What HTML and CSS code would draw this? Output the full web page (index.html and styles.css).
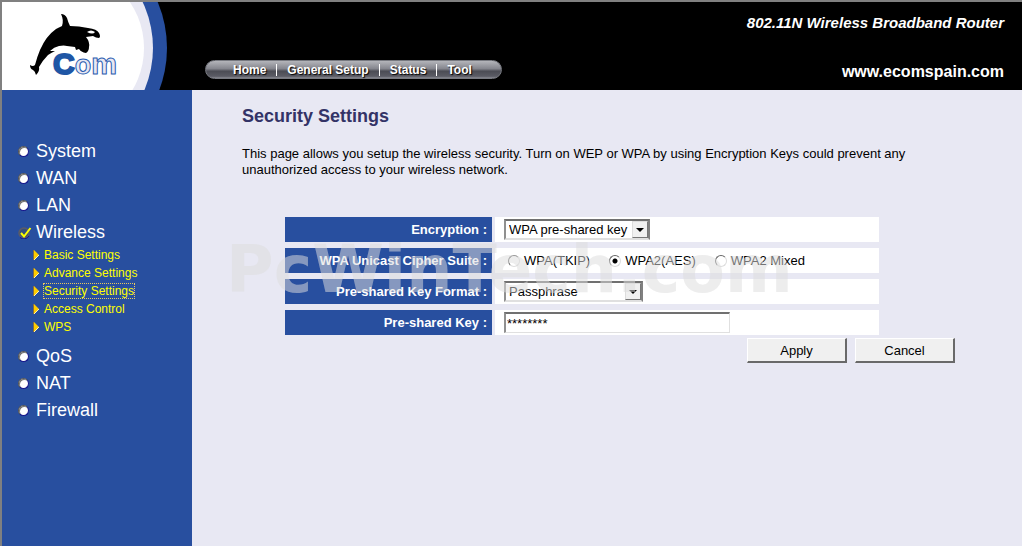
FILE: index.html
```
<!DOCTYPE html>
<html lang="en">
  <head>
    <meta charset="UTF-8" />
    <meta name="viewport" content="width=device-width, initial-scale=1.0" />
    <title>802.11N Wireless Broadband Router</title>
    <link rel="stylesheet" href="styles.css">
  </head>
  <body>
    <header class="header">
      <svg class="logo" viewBox="2 2 170 88" role="img" aria-label="eCom">
        <circle cx="49" cy="48" r="118" fill="#284f9f" />
        <circle cx="46" cy="48" r="107" fill="#e8e8f3" />
        <circle cx="62" cy="48" r="82" fill="#fff" />
        <rect x="2" y="2" width="80" height="88" fill="#fff" />
        <path d="M61 14 Q65 14 67 18 Q68 22 70 26 Q79 26 88 28 Q97 29 99 33 Q101 37 99 38 Q96 38 93 36 L86 37 Q90 42 89 47 Q89 51 86 53 Q81 52 79 49 L76 50 L75 47 L67 46 Q64 45 59 46 Q54 47 50 51 L55 51 Q51 53 48 55 Q43 60 39 67 Q40 71 36 75 Q35 71 33 70 Q30 69 30 65 Q33 67 35 65 Q37 57 40 50 Q46 36 56 29 Q60 27 62 26 Q64 20 61 14 Z" />
        <path d="M87 32 Q91 29 95 32 Q93 35 87 32 Z" fill="#fff" />
        <text class="logo-text" x="53" y="74"><tspan class="logo-c">C</tspan><tspan>o</tspan><tspan class="logo-m">m</tspan></text>
      </svg>
      <nav class="topnav">
        <a href="#">Home</a>
        <a href="#">General Setup</a>
        <a href="#">Status</a>
        <a href="#">Tool</a>
      </nav>
      <div class="brand">
        <div class="model">802.11N Wireless Broadband Router</div>
        <a class="site" href="#">www.ecomspain.com</a>
      </div>
    </header>

    <div class="layout">
      <nav class="sidebar">
        <ul class="menu">
          <li><a href="#"><span class="dot"></span>System</a></li>
          <li><a href="#"><span class="dot"></span>WAN</a></li>
          <li><a href="#"><span class="dot"></span>LAN</a></li>
          <li>
            <a href="#">
              <svg class="check" viewBox="0 0 14 12">
                <circle cx="6" cy="6" r="5" fill="#35507c" stroke="#5c5c66" stroke-width="1.5" />
                <path d="M2 10.500A6 6 0 0 0 11 9" fill="none" stroke="#16168c" />
                <path d="M3 6 L6 9.500 L12.500 1" fill="none" stroke="#ff0" stroke-width="2" />
              </svg>Wireless
            </a>
            <ul class="submenu">
              <li><svg class="arrow" viewBox="0 0 6 10"><path d="M1 0v10l5-5z" fill="#fc0" /><path d="M.5 0v10" stroke="#886f3c" /><path d="M1 10l5-5" stroke="#fff3b0" /></svg><a href="#">Basic Settings</a></li>
              <li><svg class="arrow" viewBox="0 0 6 10"><path d="M1 0v10l5-5z" fill="#fc0" /><path d="M.5 0v10" stroke="#886f3c" /><path d="M1 10l5-5" stroke="#fff3b0" /></svg><a href="#">Advance Settings</a></li>
              <li><svg class="arrow" viewBox="0 0 6 10"><path d="M1 0v10l5-5z" fill="#fc0" /><path d="M.5 0v10" stroke="#886f3c" /><path d="M1 10l5-5" stroke="#fff3b0" /></svg><a class="active" href="#">Security Settings</a></li>
              <li><svg class="arrow" viewBox="0 0 6 10"><path d="M1 0v10l5-5z" fill="#fc0" /><path d="M.5 0v10" stroke="#886f3c" /><path d="M1 10l5-5" stroke="#fff3b0" /></svg><a href="#">Access Control</a></li>
              <li><svg class="arrow" viewBox="0 0 6 10"><path d="M1 0v10l5-5z" fill="#fc0" /><path d="M.5 0v10" stroke="#886f3c" /><path d="M1 10l5-5" stroke="#fff3b0" /></svg><a href="#">WPS</a></li>
            </ul>
          </li>
          <li><a href="#"><span class="dot"></span>QoS</a></li>
          <li><a href="#"><span class="dot"></span>NAT</a></li>
          <li><a href="#"><span class="dot"></span>Firewall</a></li>
        </ul>
      </nav>

      <main class="content">
        <h1>Security Settings</h1>
        <p class="intro">This page allows you setup the wireless security. Turn on WEP or WPA by using Encryption Keys could prevent any unauthorized access to your wireless network.</p>

        <form class="form">
          <div class="rows">
            <label class="label" for="encryption">Encryption :</label>
            <div class="field">
              <span class="select">
                <select id="encryption">
                  <option>WPA pre-shared key</option>
                </select>
                <span class="select-btn"></span>
              </span>
            </div>

            <div class="label" id="cipher">WPA Unicast Cipher Suite :</div>
            <div class="field radios" role="radiogroup" aria-labelledby="cipher">
              <label><input type="radio" name="cipher" />WPA(TKIP)</label>
              <label><input type="radio" name="cipher" checked />WPA2(AES)</label>
              <label><input type="radio" name="cipher" />WPA2 Mixed</label>
            </div>

            <label class="label" for="format">Pre-shared Key Format :</label>
            <div class="field">
              <span class="select format">
                <select id="format">
                  <option>Passphrase</option>
                </select>
                <span class="select-btn"></span>
              </span>
            </div>

            <label class="label" for="key">Pre-shared Key :</label>
            <div class="field">
              <input class="text" type="text" id="key" value="********" />
            </div>
          </div>
          <div class="actions">
            <button class="button" type="button">Apply</button>
            <button class="button" type="button">Cancel</button>
          </div>
          <div class="watermark">PcWinTech.com</div>
        </form>
      </main>
    </div>
  </body>
</html>
```
FILE: styles.css
```
* {
  box-sizing: border-box;
}
body {
  margin: 0;
  min-height: 100vh;
  display: flex;
  flex-direction: column;
  border-top: 2px solid #808080;
  border-left: 2px solid #808080;
  background: #e8e8f3;
  color: #000;
  font-family: "Liberation Sans", Arial, sans-serif;
  font-size: 13px;
}
a {
  color: inherit;
  text-decoration: none;
}
ul {
  list-style: none;
  margin: 0;
  padding: 0;
}

/* header */
.header {
  display: flex;
  height: 88px;
  background: #000;
  color: #fff;
}
.logo {
  width: 170px;
  height: 88px;
  flex: none;
}
.logo-text {
  fill: #e8e8f3;
  font-family: "Liberation Sans", Arial, sans-serif;
  font-size: 27px;
  font-weight: 700;
  stroke: #2a5cb0;
  stroke-width: 1px;
}
.logo-c {
  fill: #1f56a5;
  font-size: 30px;
  stroke: #1f56a5;
  stroke-width: 2px;
}
.logo-m {
  font-size: 29px;
}
.topnav {
  align-self: flex-end;
  display: flex;
  align-items: center;
  width: 297px;
  height: 19px;
  margin: 0 0 11px 33px;
  padding-left: 17px;
  border-radius: 10px;
  border: 1px solid #777980;
  background: linear-gradient(#b4b5ba, #85868e 45%, #4c4d55 60%, #5b5c65 90%, #8a8b92);
  font-size: 12px;
  font-weight: 700;
  text-shadow: 1px 1px 1px #000;
}
.topnav a {
  padding: 0 10px;
  line-height: 12px;
}
.topnav a + a {
  border-left: 1px solid #fff;
}
.brand {
  flex: 1;
  display: flex;
  flex-direction: column;
  align-items: flex-end;
  justify-content: space-between;
  padding: 12px 18px 9px 0;
  font-weight: 700;
  white-space: nowrap;
}
.model {
  font-size: 15px;
  line-height: 18px;
  font-style: italic;
}
.site {
  font-size: 16px;
  line-height: 18px;
}

/* left menu */
.layout {
  flex: 1;
  display: flex;
}
.sidebar {
  flex: none;
  width: 190px;
  padding: 48px 0 20px 16px;
  background: #284f9f;
  color: #fff;
}
.menu > li > a {
  display: flex;
  align-items: center;
  font-size: 18px;
  line-height: 27px;
}
.dot {
  width: 11px;
  height: 11px;
  margin-right: 7px;
  border-radius: 50%;
  border: 1px solid;
  border-color: #555 #16168c #16168c #555;
  background: #fff;
  box-shadow: inset 1px 1px 0 #777;
}
.check {
  width: 14px;
  height: 12px;
  margin-right: 4px;
}
.submenu {
  margin: 0 0 7px 15px;
  color: #ff0;
  font-size: 12px;
}
.submenu li {
  display: flex;
  align-items: center;
  height: 18px;
}
.arrow {
  width: 6px;
  height: 10px;
  margin-right: 5px;
}
.submenu .active {
  outline: 1px dotted #e8c860;
}

/* content */
.content {
  flex: 1;
  max-width: 763px;
  padding: 16px 0 20px 50px;
}
h1 {
  margin: 0;
  color: #333366;
  font-size: 18px;
  line-height: 20px;
}
.intro {
  margin: 20px 0 39px;
  padding-right: 30px;
  line-height: 16px;
}
.form {
  position: relative;
}
.rows {
  display: grid;
  grid-template-columns: 207px 1fr;
  gap: 6px 3px;
  margin: 0 76px 0 43px;
}
.label {
  padding-right: 5px;
  background: #284f9f;
  color: #fff;
  font-weight: 700;
  line-height: 25px;
  text-align: right;
}
.field {
  display: flex;
  align-items: center;
  min-height: 25px;
  padding-left: 9px;
  background: #fff;
}
.select {
  position: relative;
  width: 146px;
}
.select.format {
  width: 139px;
}
select,
.text {
  display: block;
  width: 100%;
  height: 21px;
  margin: 0;
  border: 2px solid;
  border-color: #707070 #e0e0e0 #e0e0e0 #909090;
  border-radius: 0;
  background: #fff;
  color: #000;
  font: inherit;
}
select {
  appearance: none;
  padding: 0 18px 0 3px;
  border-right-color: #808080;
}
.text {
  width: 226px;
  padding: 0 1px;
  border-right-width: 1px;
  border-bottom-width: 1px;
}
.select-btn {
  position: absolute;
  top: 2px;
  right: 2px;
  width: 16px;
  height: 17px;
  border: 1px solid;
  border-color: #ddd #777 #777 #ddd;
  background: #f0f0f0;
  pointer-events: none;
}
.select-btn::after {
  content: "";
  display: block;
  margin: 6px 0 0 3px;
  width: 0;
  border: 4px solid transparent;
  border-top-color: #000;
  border-bottom: 0;
}
.radios {
  gap: 15px;
}
.radios label {
  display: flex;
  align-items: center;
}
.radios input {
  appearance: none;
  width: 12px;
  height: 12px;
  margin: 0 4px 0 4px;
  border: 1px solid;
  border-color: #666 #ddd #ddd #666;
  border-radius: 50%;
  background: #fff;
}
.radios input:checked {
  background: radial-gradient(circle, #000 2px, #fff 3px);
}
.actions {
  display: flex;
  justify-content: flex-end;
  gap: 8px;
  margin-top: 3px;
}
.button {
  width: 100px;
  height: 25px;
  padding: 0;
  border: 1px solid;
  border-color: #fff #696969 #696969 #fff;
  border-right-width: 2px;
  border-bottom-width: 2px;
  background: #f0f0f0;
  color: #000;
  font: inherit;
}
.watermark {
  position: absolute;
  top: 15px;
  left: -16px;
  color: rgba(221, 221, 221, 0.52);
  font-family: "DejaVu Sans", Verdana, sans-serif;
  font-size: 65px;
  font-weight: 700;
  line-height: 76px;
  white-space: nowrap;
  pointer-events: none;
}
```
